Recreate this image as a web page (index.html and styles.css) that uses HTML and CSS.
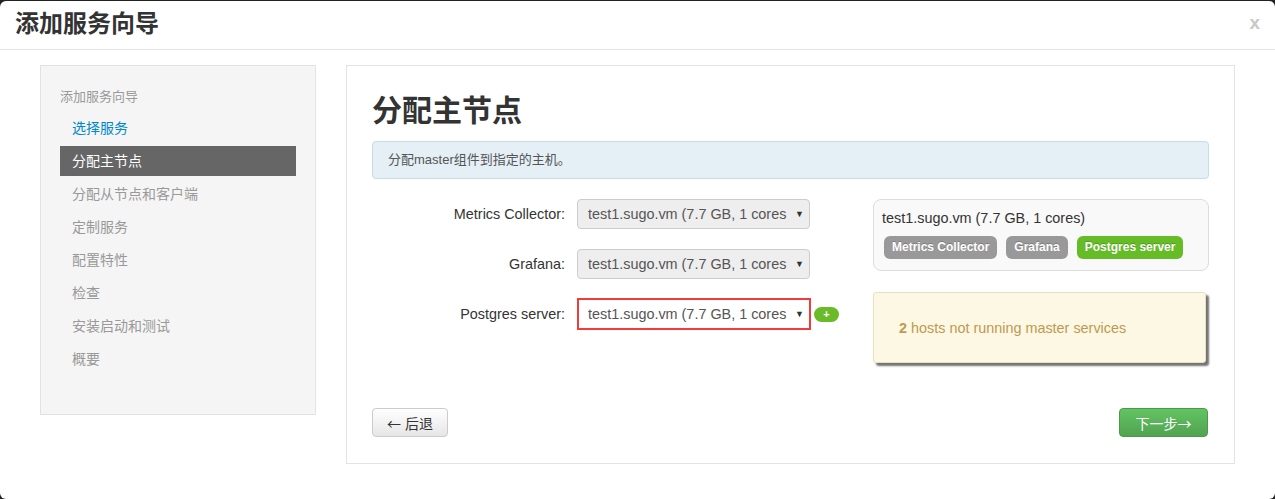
FILE: index.html
```html
<!DOCTYPE html>
<html lang="zh">
<head>
<meta charset="utf-8">
<title>添加服务向导</title>
<link rel="stylesheet" href="styles.css">
</head>
<body>
<div class="modal">
  <div class="modal-header">
    <h3 class="modal-title">添加服务向导</h3>
    <span class="close">x</span>
  </div>
  <div class="modal-body">
    <div class="sidebar">
      <div class="nav-header">添加服务向导</div>
      <ul class="nav-list">
        <li class="done">选择服务</li>
        <li class="active">分配主节点</li>
        <li>分配从节点和客户端</li>
        <li>定制服务</li>
        <li>配置特性</li>
        <li>检查</li>
        <li>安装启动和测试</li>
        <li>概要</li>
      </ul>
    </div>
    <div class="main">
      <h2 class="page-title">分配主节点</h2>
      <div class="alert">分配master组件到指定的主机。</div>
      <div class="assign">
        <div class="form-col">
          <div class="form-row">
            <label class="row-label">Metrics Collector:</label>
            <div class="select"><span class="select-text">test1.sugo.vm (7.7 GB, 1 cores</span><span class="caret">▼</span></div>
          </div>
          <div class="form-row">
            <label class="row-label">Grafana:</label>
            <div class="select"><span class="select-text">test1.sugo.vm (7.7 GB, 1 cores</span><span class="caret">▼</span></div>
          </div>
          <div class="form-row">
            <label class="row-label">Postgres server:</label>
            <div class="select select-marked"><span class="select-text">test1.sugo.vm (7.7 GB, 1 cores</span><span class="caret">▼</span></div>
            <span class="add-badge">+</span>
          </div>
        </div>
        <div class="host-col">
          <div class="host-box">
            <div class="host-name">test1.sugo.vm (7.7 GB, 1 cores)</div>
            <div class="badges">
              <span class="badge">Metrics Collector</span>
              <span class="badge">Grafana</span>
              <span class="badge badge-new">Postgres server</span>
            </div>
          </div>
          <div class="hosts-note"><span><b>2</b> hosts not running master services</span></div>
        </div>
      </div>
      <div class="wizard-footer">
        <button class="btn"><span class="arrow">←</span> 后退</button>
        <button class="btn btn-success">下一步<span class="arrow">→</span></button>
      </div>
    </div>
  </div>
</div>
</body>
</html>
```
FILE: styles.css
```css
* { box-sizing: border-box; }
html, body { margin: 0; padding: 0; }
body {
  background: #222;
  font-family: "Liberation Sans", Arial, "Noto Sans CJK SC", sans-serif;
  font-size: 14px;
  color: #333;
  height: 499px;
  overflow: hidden;
}
.modal {
  margin-top: 1px;
  height: 498px;
  background: #fff;
  border-radius: 6px;
}
.modal-header {
  height: 49px;
  border-bottom: 1px solid #e5e5e5;
  display: flex;
  align-items: center;
  justify-content: space-between;
  padding: 0 15px 0 15px;
}
.modal-title {
  margin: 0;
  font-size: 24px;
  font-weight: bold;
  color: #333;
  line-height: 30px;
  padding-bottom: 2px;
}
.close {
  font-size: 19px;
  font-weight: bold;
  color: #c8c8c8;
  padding-bottom: 4px;
}
.modal-body {
  display: flex;
  align-items: flex-start;
  padding: 15px 40px 0 40px;
  gap: 30px;
}
.sidebar {
  width: 276px;
  height: 350px;
  flex: none;
  background: #f5f5f5;
  border: 1px solid #e3e3e3;
  padding: 22px 19px;
}
.nav-header {
  font-size: 13px;
  line-height: 18px;
  color: #999;
  margin-bottom: 7px;
}
.nav-list {
  list-style: none;
  margin: 0;
  padding: 0;
}
.nav-list li {
  height: 30px;
  line-height: 30px;
  padding-left: 12px;
  margin-bottom: 3px;
  color: #999;
  font-size: 14px;
}
.nav-list li.done { color: #0088cc; }
.nav-list li.active { background: #666; color: #fff; }
.main {
  flex: 1;
  height: 399px;
  border: 1px solid #e3e3e3;
  padding: 25px 25px 0 25px;
}
.page-title {
  margin: 0 0 10px 0;
  font-size: 30px;
  line-height: 40px;
  font-weight: bold;
  color: #333;
}
.alert {
  background: #e5f0f6;
  border: 1px solid #c9dbe4;
  border-radius: 4px;
  padding: 9px 15px;
  line-height: 18px;
  font-size: 13px;
  color: #555;
}
.assign {
  display: flex;
  justify-content: space-between;
  margin-top: 20px;
  height: 166px;
}
.form-col { width: 470px; }
.form-row {
  display: flex;
  align-items: center;
  height: 30px;
  margin-bottom: 20px;
}
.row-label {
  width: 205px;
  padding-right: 12px;
  text-align: right;
  color: #333;
  font-size: 14.4px;
}
.select {
  width: 233px;
  height: 30px;
  background: #eee;
  border: 1px solid #ccc;
  border-radius: 4px;
  display: flex;
  align-items: center;
  padding: 0 5px 0 10px;
  color: #555;
  font-size: 14.4px;
}
.select-marked {
  background: #fff;
  border: 2px solid #f23b3b;
  border-radius: 0;
  padding-left: 9px;
  height: 32px;
  width: 234px;
}
.select-text {
  flex: 1;
  white-space: nowrap;
}
.caret {
  font-size: 9px;
  color: #333;
  margin-left: 4px;
}
.add-badge {
  margin-left: 3px;
  width: 25px;
  height: 15px;
  border-radius: 8px;
  background: #69bb2a;
  color: #fff;
  font-size: 11px;
  font-weight: bold;
  line-height: 15px;
  text-align: center;
}
.host-col { width: 336px; }
.host-box {
  background: #f9f9f9;
  border: 1px solid #ddd;
  border-radius: 8px;
  padding: 8px 9px 11px 8px;
  height: 72px;
}
.host-name {
  line-height: 20px;
  font-size: 14.4px;
  color: #333;
}
.badges {
  display: flex;
  gap: 9px;
  margin-top: 8px;
  padding-left: 2px;
}
.badge {
  height: 23px;
  line-height: 23px;
  padding: 0 8px;
  border-radius: 6px;
  background: #999;
  color: #fff;
  font-size: 12px;
  font-weight: bold;
  text-shadow: 0 -1px 0 rgba(0,0,0,.2);
}
.badge-new { background: #65bc26; }
.hosts-note {
  margin-top: 21px;
  width: 333px;
  height: 71px;
  background: #fcf8e3;
  border: 1px solid #e8e0c0;
  border-radius: 3px;
  box-shadow: 3px 3px 2px rgba(0,0,0,.55);
  padding: 0 25px;
  display: flex;
  align-items: center;
  color: #c09853;
  font-size: 14.4px;
}
.wizard-footer {
  display: flex;
  justify-content: space-between;
  margin-top: 43px;
}
.btn {
  height: 29px;
  font-family: "Liberation Sans", Arial, "Noto Sans CJK SC", sans-serif;
  font-size: 14px;
  border-radius: 4px;
  padding: 0;
  border: 1px solid #ccc;
  background: linear-gradient(#fff, #e6e6e6);
  color: #333;
  width: 76px;
}
.arrow {
  font-family: "Noto Sans CJK SC", sans-serif;
}
.btn-success {
  width: 89px;
  margin-right: 1px;
  color: #fff;
  border-color: #4a9a4a;
  background: linear-gradient(#62c462, #51a351);
}
```
